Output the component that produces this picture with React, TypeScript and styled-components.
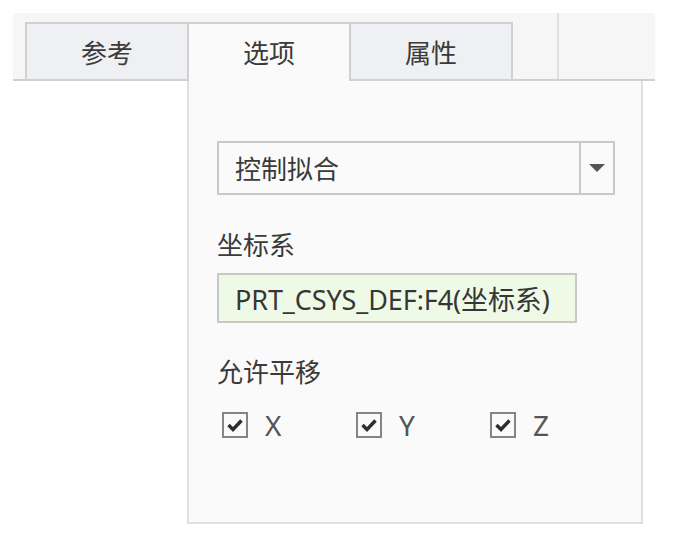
import React, { useState } from "react";
import styled, { createGlobalStyle } from "styled-components";

const GlobalStyle = createGlobalStyle`
  html, body {
    margin: 0;
    padding: 0;
    background: #ffffff;
  }
  body {
    font-family: "Noto Sans", "Noto Sans CJK SC", sans-serif;
    color: #3c3c3c;
  }
`;

const Page = styled.div`
  padding: 13px 0 0 13px;
  width: 676px;
  height: 544px;
  box-sizing: border-box;
`;

const TabBar = styled.div`
  display: flex;
  width: 642px;
  height: 68px;
  box-sizing: border-box;
  background: #f6f6f6;
  border-bottom: 2px solid #d0d0d0;
`;

const TabStrip = styled.div`
  display: flex;
  align-items: flex-end;
  padding: 9px 0 0 12px;
`;

const Tab = styled.div<{ $active?: boolean }>`
  position: relative;
  z-index: ${(p) => (p.$active ? 1 : 0)};
  width: 164px;
  height: ${(p) => (p.$active ? "59px" : "57px")};
  margin-left: -2px;
  margin-bottom: ${(p) => (p.$active ? "-2px" : "0")};
  box-sizing: border-box;
  display: flex;
  align-items: center;
  justify-content: center;
  padding-bottom: ${(p) => (p.$active ? "2px" : "0")};
  border: 2px solid #d0d0d0;
  border-bottom: none;
  background: ${(p) => (p.$active ? "#fafafa" : "#eef0f3")};
  font-size: 26px;
  color: #3a3a3a;
  cursor: pointer;

  &:first-child {
    margin-left: 0;
  }
`;

const Divider = styled.div`
  margin-left: 44px;
  border-left: 2px solid #e0e0e0;
`;

const Panel = styled.div`
  margin-left: 174px;
  width: 456px;
  height: 443px;
  box-sizing: border-box;
  padding: 60px 0 0 28px;
  background: #fafafa;
  border: 2px solid #e0e0e0;
  border-top: none;
`;

const Select = styled.div`
  display: flex;
  width: 398px;
  height: 54px;
  box-sizing: border-box;
  border: 2px solid #c8c8c8;
  background: #fafafa;
`;

const SelectValue = styled.div`
  flex: 1;
  display: flex;
  align-items: center;
  padding-left: 16px;
  font-size: 26px;
  color: #3a3a3a;
`;

const SelectButton = styled.div`
  width: 32px;
  display: flex;
  align-items: center;
  justify-content: center;
  border-left: 2px solid #c8c8c8;
`;

const Label = styled.div<{ $gap: number }>`
  margin-top: ${(p) => p.$gap}px;
  font-size: 26px;
  line-height: 36px;
  color: #3a3a3a;
`;

const Field = styled.div`
  margin-top: 10px;
  width: 360px;
  height: 50px;
  box-sizing: border-box;
  display: flex;
  align-items: center;
  padding-left: 16px;
  border: 2px solid #c8c8c8;
  background: #effae6;
  font-size: 27px;
  letter-spacing: -0.1px;
  color: #363636;
  white-space: nowrap;
`;

const CheckRow = styled.div`
  display: flex;
  margin-top: 21px;
  padding-left: 5px;
`;

const CheckItem = styled.label`
  display: flex;
  align-items: center;
  width: 134px;
  cursor: pointer;
`;

const Box = styled.span`
  width: 26px;
  height: 26px;
  box-sizing: border-box;
  display: flex;
  align-items: center;
  justify-content: center;
  border: 2px solid #858585;
  background: #fafafa;
`;

const AxisName = styled.span`
  margin-left: 17px;
  font-size: 28px;
  line-height: 1;
  color: #555;
`;

const Check = () => (
  <svg width="18" height="18" viewBox="0 0 18 18">
    <path
      d="M2.5 9 L7 13.5 L15.5 4.5"
      fill="none"
      stroke="#2e2e2e"
      strokeWidth="3.4"
      strokeLinejoin="miter"
    />
  </svg>
);

const tabs = ["参考", "选项", "属性"];
const axes = ["X", "Y", "Z"];

export default function App() {
  const [active, setActive] = useState(1);
  const [checked, setChecked] = useState<Record<string, boolean>>({
    X: true,
    Y: true,
    Z: true,
  });

  return (
    <>
      <GlobalStyle />
      <Page>
        <TabBar>
          <TabStrip>
            {tabs.map((t, i) => (
              <Tab key={t} $active={i === active} onClick={() => setActive(i)}>
                {t}
              </Tab>
            ))}
          </TabStrip>
          <Divider />
        </TabBar>
        <Panel>
          <Select>
            <SelectValue>控制拟合</SelectValue>
            <SelectButton>
              <svg width="18" height="10" viewBox="0 0 18 10">
                <path d="M1 1 H17 L9 9 Z" fill="#555" />
              </svg>
            </SelectButton>
          </Select>
          <Label $gap={32}>坐标系</Label>
          <Field>PRT_CSYS_DEF:F4(坐标系)</Field>
          <Label $gap={31}>允许平移</Label>
          <CheckRow>
            {axes.map((a) => (
              <CheckItem
                key={a}
                onClick={() => setChecked({ ...checked, [a]: !checked[a] })}
              >
                <Box>{checked[a] && <Check />}</Box>
                <AxisName>{a}</AxisName>
              </CheckItem>
            ))}
          </CheckRow>
        </Panel>
      </Page>
    </>
  );
}
